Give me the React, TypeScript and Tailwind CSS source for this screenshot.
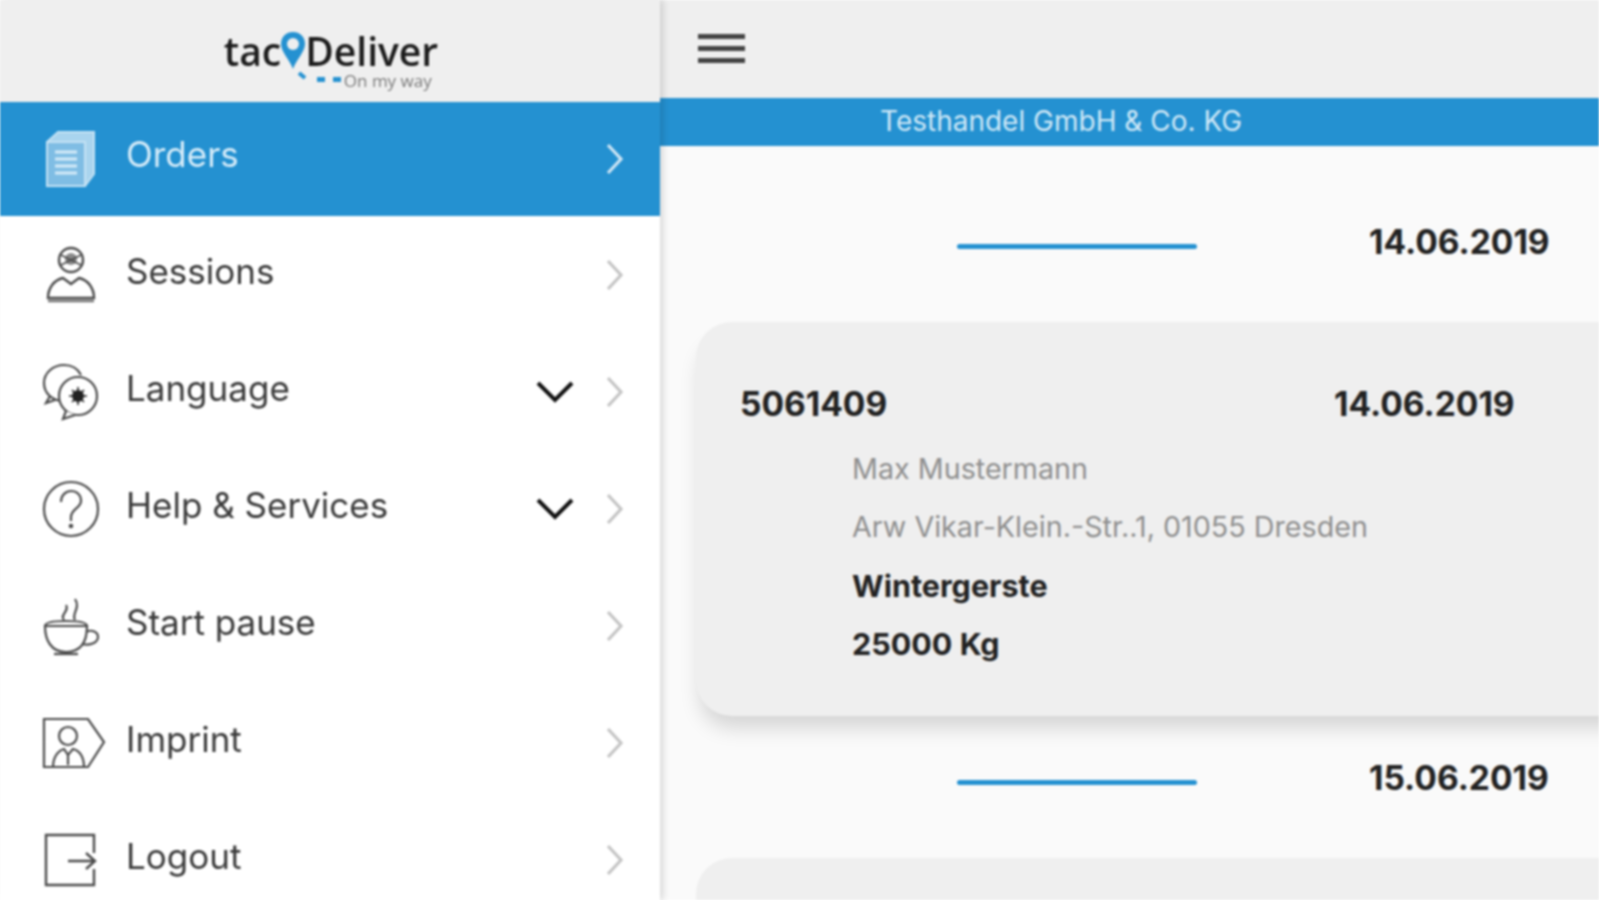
import React from "react";

const BLUE = "#2491d1";

function OrdersIcon() {
  return (
    <svg width="54" height="62" viewBox="0 0 54 62" fill="none">
      <path d="M3 14 L14 4 H50 V46 L41 58 H3 Z" fill="#a9d4ee" stroke="#c4e2f4" strokeWidth="2" />
      <path d="M3 14 H41 V58" stroke="#d3e9f7" strokeWidth="2" />
      <path d="M3 14 H41 V58 H3 Z" fill="#7fbde4" stroke="#c4e2f4" strokeWidth="2" />
      <path d="M11 24 H33 M11 31 H33 M11 38 H33 M11 45 H33" stroke="#d5ebf8" strokeWidth="3" />
    </svg>
  );
}
function SessionsIcon() {
  return (
    <svg width="54" height="58" viewBox="0 0 54 58" fill="none" stroke="#4a4a4a" strokeWidth="2.4">
      <circle cx="27" cy="14" r="12" />
      <circle cx="27" cy="13" r="6" fill="#8a8a8a" stroke="none" />
      <path d="M17 9 L37 19 M37 9 L17 19" strokeWidth="1.6" />
      <path d="M19 32 C10 34 4 42 4 52 H50 C50 42 44 34 35 32 L27 38 Z" />
      <path d="M4 55 H50" strokeWidth="2.6" stroke="#777" />
    </svg>
  );
}
function LanguageIcon() {
  return (
    <svg width="58" height="58" viewBox="0 0 58 58" fill="none" stroke="#4a4a4a" strokeWidth="2.2">
      <path d="M22 38 C10 38 2 30 2 20 C2 10 11 2 22 2 C30 2 36 6 39 12" />
      <path d="M8 33 L4 40 L13 37" />
      <circle cx="36" cy="33" r="19" fill="#fff" />
      <path d="M24 48 L21 56 L33 52" fill="#fff" />
      <circle cx="36" cy="33" r="6" fill="#222" stroke="none" />
      <path d="M36 24 V42 M27 33 H45 M30 27 L42 39 M42 27 L30 39" strokeWidth="1.6" stroke="#222" />
    </svg>
  );
}
function HelpIcon() {
  return (
    <svg width="58" height="58" viewBox="0 0 58 58" fill="none" stroke="#4a4a4a" strokeWidth="2.2">
      <circle cx="29" cy="29" r="27" />
      <path d="M19 22 C19 15 24 11 29 11 C35 11 39 15 39 21 C39 28 29 29 29 37 V41" />
      <circle cx="29" cy="46" r="1.2" />
    </svg>
  );
}
function CupIcon() {
  return (
    <svg width="58" height="60" viewBox="0 0 58 60" fill="none" stroke="#4a4a4a" strokeWidth="2.2">
      <path d="M22 24 C17 19 28 15 24 9 M33 24 C29 18 39 12 33 3" />
      <path d="M3 30 H45 C45 44 40 56 24 56 C9 56 3 44 3 30 Z" />
      <path d="M3 30 C3 26 12 25 24 25 C36 25 45 26 45 30" />
      <path d="M44 36 C50 33 56 36 56 41 C56 47 47 50 40 48" />
      <path d="M12 58 H36" />
    </svg>
  );
}
function ImprintIcon() {
  return (
    <svg width="64" height="52" viewBox="0 0 64 52" fill="none" stroke="#4a4a4a" strokeWidth="2.2" className="ml-[6px] shrink-0">
      <path d="M2 2 H46 L62 25 L46 50 H2 Z" />
      <circle cx="26" cy="19" r="9" />
      <path d="M11 50 C11 38 18 33 22 32 L26 38 L31 32 C36 33 42 38 42 50" />
      <path d="M26 38 V48" />
    </svg>
  );
}
function LogoutIcon() {
  return (
    <svg width="54" height="54" viewBox="0 0 54 54" fill="none" stroke="#4a4a4a" strokeWidth="2.4">
      <path d="M50 20 V2 H2 V52 H50 V36" />
      <path d="M24 28 H50 M42 20 L51 28 L42 36" />
    </svg>
  );
}
function RightChevron({ light }: { light?: boolean }) {
  return (
    <svg width="20" height="34" viewBox="0 0 20 34" fill="none" stroke={light ? "#cfe6f5" : "#c4c4c4"} strokeWidth="3.2">
      <path d="M3 3 L16 17 L3 31" />
    </svg>
  );
}
function DownChevron() {
  return (
    <svg width="38" height="24" viewBox="0 0 38 24" fill="none" stroke="#111" strokeWidth="4">
      <path d="M2 3 L19 20 L36 3" />
    </svg>
  );
}

function Row({ icon, label, expand }: { icon: React.ReactNode; label: string; expand?: boolean }) {
  return (
    <div className="h-[117px] shrink-0 flex items-center bg-white text-[#3a3a3a]">
      <div className="w-[126px] pl-[41px] pr-[26px] flex justify-center shrink-0">{icon}</div>
      <span className="flex-1 text-[35px] pb-[7px]">{label}</span>
      {expand && (
        <div className="mr-[31px]">
          <DownChevron />
        </div>
      )}
      <div className="mr-[35px]">
        <RightChevron />
      </div>
    </div>
  );
}

function Sidebar() {
  return (
    <aside className="w-[660px] shrink-0 h-full flex flex-col bg-white shadow-[3px_0_7px_rgba(0,0,0,0.14)] relative z-10">
      <div className="h-[102px] shrink-0 bg-[#efefef] flex flex-col items-center pt-[31px]">
        <div className="relative flex items-center text-[#1c1c1c] text-[39px] font-semibold leading-none font-['Open_Sans'] pl-[2px]">
          <span>tac</span>
          <svg width="28" height="52" viewBox="0 0 28 52" className="mx-[-2px] -my-[12px] translate-y-[6px]" fill="none">
            <path d="M14 1 C6 1 2 7 2 13 C2 21 11 29 14 38 C17 29 26 21 26 13 C26 7 22 1 14 1 Z" fill="#2491d1" />
            <circle cx="14" cy="13" r="6" fill="#efefef" />
            <path d="M20 42 L26 47" stroke="#2491d1" strokeWidth="4" />
          </svg>
          <div className="absolute left-[95px] top-[46px] flex items-center gap-[8px]">
            <span className="w-[8px] h-[5px] bg-[#2491d1]" />
            <span className="w-[8px] h-[5px] bg-[#2491d1]" />
          </div>
          <span>Deliver</span>
          <span className="absolute left-[122px] top-[41px] text-[#7a7a7a] text-[17px] font-normal whitespace-nowrap">On my way</span>
        </div>
      </div>
      <div className="h-[114px] shrink-0 flex items-center text-[#d6ecf9]" style={{ backgroundColor: BLUE }}>
        <div className="w-[126px] pl-[41px] pr-[26px] flex justify-center shrink-0">
          <OrdersIcon />
        </div>
        <span className="flex-1 text-[35px] pb-[10px]">Orders</span>
        <div className="mr-[35px]">
          <RightChevron light />
        </div>
      </div>
      <Row icon={<SessionsIcon />} label="Sessions" />
      <Row icon={<LanguageIcon />} label="Language" expand />
      <Row icon={<HelpIcon />} label="Help & Services" expand />
      <Row icon={<CupIcon />} label="Start pause" />
      <Row icon={<ImprintIcon />} label="Imprint" />
      <Row icon={<LogoutIcon />} label="Logout" />
    </aside>
  );
}

function DateLine({ date }: { date: string }) {
  return (
    <div className="flex items-center pl-[297px] h-[34px]">
      <div className="w-[240px] h-[5px] mt-[11px] rounded-full" style={{ backgroundColor: BLUE }} />
      <span className="ml-[172px] mt-[3px] text-[33.5px] font-bold text-[#222] leading-none">{date}</span>
    </div>
  );
}

function Card() {
  return (
    <div className="ml-[36px] w-[1000px] h-[394px] shrink-0 rounded-l-[36px] bg-[#efefef] shadow-[0_16px_20px_-4px_rgba(0,0,0,0.15)] pt-[66px] pl-[44px]">
      <div className="flex items-center text-[33.5px] font-bold text-[#222] leading-none">
        <span className="w-[594px]">5061409</span>
        <span>14.06.2019</span>
      </div>
      <div className="pl-[112px] pt-[18px] flex flex-col leading-[58.5px]">
        <span className="text-[#8f8f8f] text-[28.7px]">Max Mustermann</span>
        <span className="text-[#8f8f8f] text-[28.7px]">Arw Vikar-Klein.-Str..1, 01055 Dresden</span>
        <span className="text-[#222] font-bold text-[30.5px]">Wintergerste</span>
        <span className="text-[#222] font-bold text-[30.5px]">25000 Kg</span>
      </div>
    </div>
  );
}

function Main() {
  return (
    <main className="flex-1 min-w-0 h-full flex flex-col bg-[#fafafa] overflow-hidden">
      <div className="h-[98px] shrink-0 bg-[#efefef] pl-[38px] pt-[34px]">
        <div className="w-[47px] flex flex-col gap-[7px]">
          <span className="h-[5px] bg-[#444]" />
          <span className="h-[5px] bg-[#444]" />
          <span className="h-[5px] bg-[#444]" />
        </div>
      </div>
      <div className="h-[48px] shrink-0 flex items-center pl-[220px] pb-[2px] text-[28px] text-[#cfe8f7]" style={{ backgroundColor: BLUE }}>
        Testhandel GmbH &amp; Co. KG
      </div>
      <div className="pt-[78px] pb-[64px] shrink-0">
        <DateLine date="14.06.2019" />
      </div>
      <Card />
      <div className="pt-[44px] pb-[64px] shrink-0">
        <DateLine date="15.06.2019" />
      </div>
      <div className="ml-[36px] w-[1000px] h-[200px] shrink-0 rounded-l-[36px] bg-[#efefef]" />
    </main>
  );
}

export default function App() {
  return (
    <div className="w-[1599px] h-[900px] overflow-hidden bg-white font-['Inter','Liberation_Sans',sans-serif]">
      <div className="w-full h-full flex blur-[1px]">
        <Sidebar />
        <Main />
      </div>
    </div>
  );
}
